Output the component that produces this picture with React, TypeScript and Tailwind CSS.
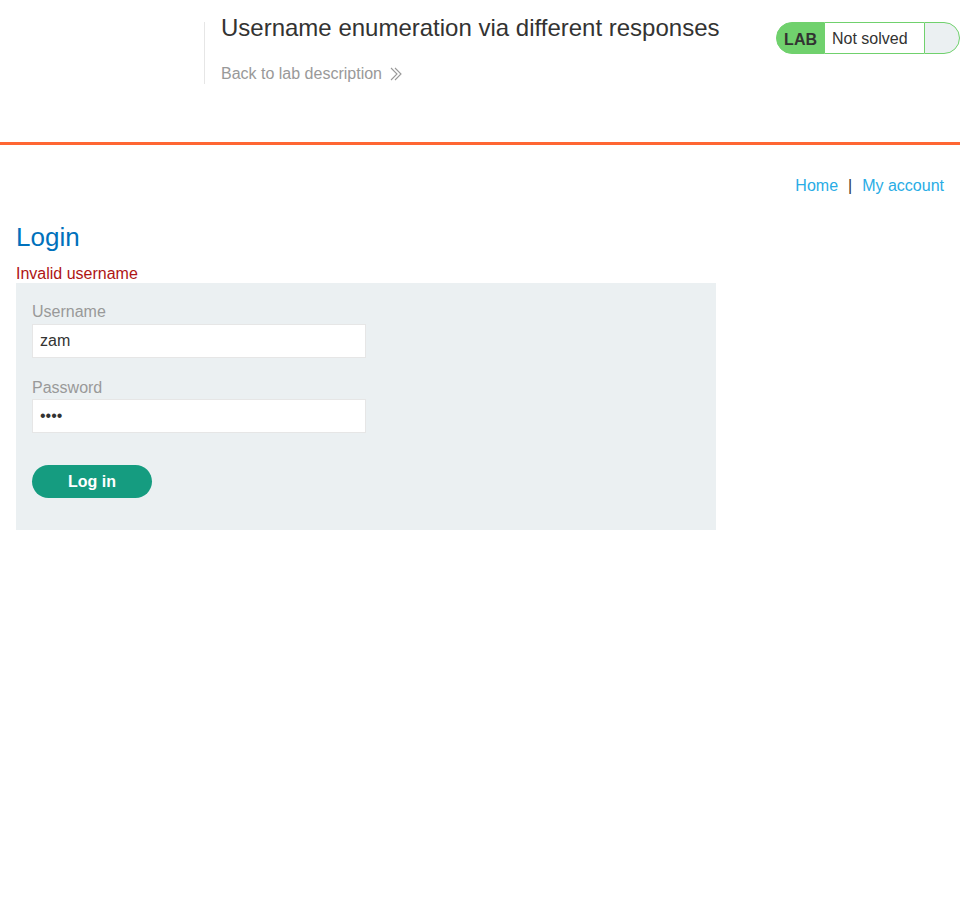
import React from "react";

export default function App() {
  return (
    <div className="min-h-[899px] bg-white text-[#333332]" style={{ fontFamily: '"Liberation Sans", Arial, sans-serif' }}>
      <header className="h-[142px] flex items-start">
        <div className="w-[204px] shrink-0" />
        <div className="mt-[22px] h-[62px] border-l border-[#e6e6e6] pl-4 flex-1 flex flex-col">
          <h2 className="text-[24px] leading-[28px] -mt-[8px] text-[#333332]">Username enumeration via different responses</h2>
          <a className="mt-[22px] flex items-center text-[16px] leading-[20px] text-[#999999]">
            Back to lab description
            <svg className="ml-[8px]" width="12" height="14" viewBox="0 0 12 14" fill="none" stroke="#999" strokeWidth="1.1">
              <path d="M1 1l6 6-6 6" />
              <path d="M5 1l6 6-6 6" />
            </svg>
          </a>
        </div>
        <div className="mt-[22px] flex h-[32px] shrink-0">
          <div className="flex items-center rounded-l-full bg-[#70d16d] px-[7px] text-[16px] font-bold text-[#333332] border border-[#70d16d]">
            <span className="mt-[3px]">LAB</span>
          </div>
          <div className="flex items-center bg-white border-y border-[#70d16d] pl-[7px] w-[99px] text-[16px] text-[#333332]">
            <span className="mt-[2px]">Not solved</span>
          </div>
          <div className="w-[36px] bg-[#ebf0f2] border border-[#70d16d] rounded-r-full" />
        </div>
      </header>
      <div className="h-[3px] bg-[#ff6633]" />
      <section className="px-4">
        <nav className="flex justify-end items-center mt-[31px] text-[16px] leading-[20px]">
          <a className="text-[#29ace5]">Home</a>
          <span className="mx-[10px] text-[#333332]">|</span>
          <a className="text-[#29ace5]">My account</a>
        </nav>
        <h1 className="mt-[26px] text-[26px] leading-[30px] text-[#0071bc]">Login</h1>
        <p className="mt-[12px] text-[16px] leading-[19px] text-[#ae1414]">Invalid username</p>
        <form className="w-[700px] bg-[#ebf0f2] px-4 pt-[19px] pb-[32px] flex flex-col" onSubmit={(e) => e.preventDefault()}>
          <label className="text-[16px] leading-[20px] text-[#999999]">Username</label>
          <input
            className="mt-[2px] w-[334px] h-[34px] bg-white border border-[#e6e6e6] px-[7px] text-[16px] text-[#333332] outline-none"
            defaultValue="zam"
          />
          <label className="mt-[20px] text-[16px] leading-[20px] text-[#999999]">Password</label>
          <input
            type="password"
            className="mt-[1px] w-[334px] h-[34px] bg-white border border-[#e6e6e6] px-[7px] text-[16px] text-[#333332] outline-none"
            defaultValue="pass"
          />
          <button
            type="submit"
            className="mt-[32px] w-[120px] h-[33px] rounded-full bg-[#159c80] text-white font-bold text-[16px]"
          >
            Log in
          </button>
        </form>
      </section>
    </div>
  );
}
